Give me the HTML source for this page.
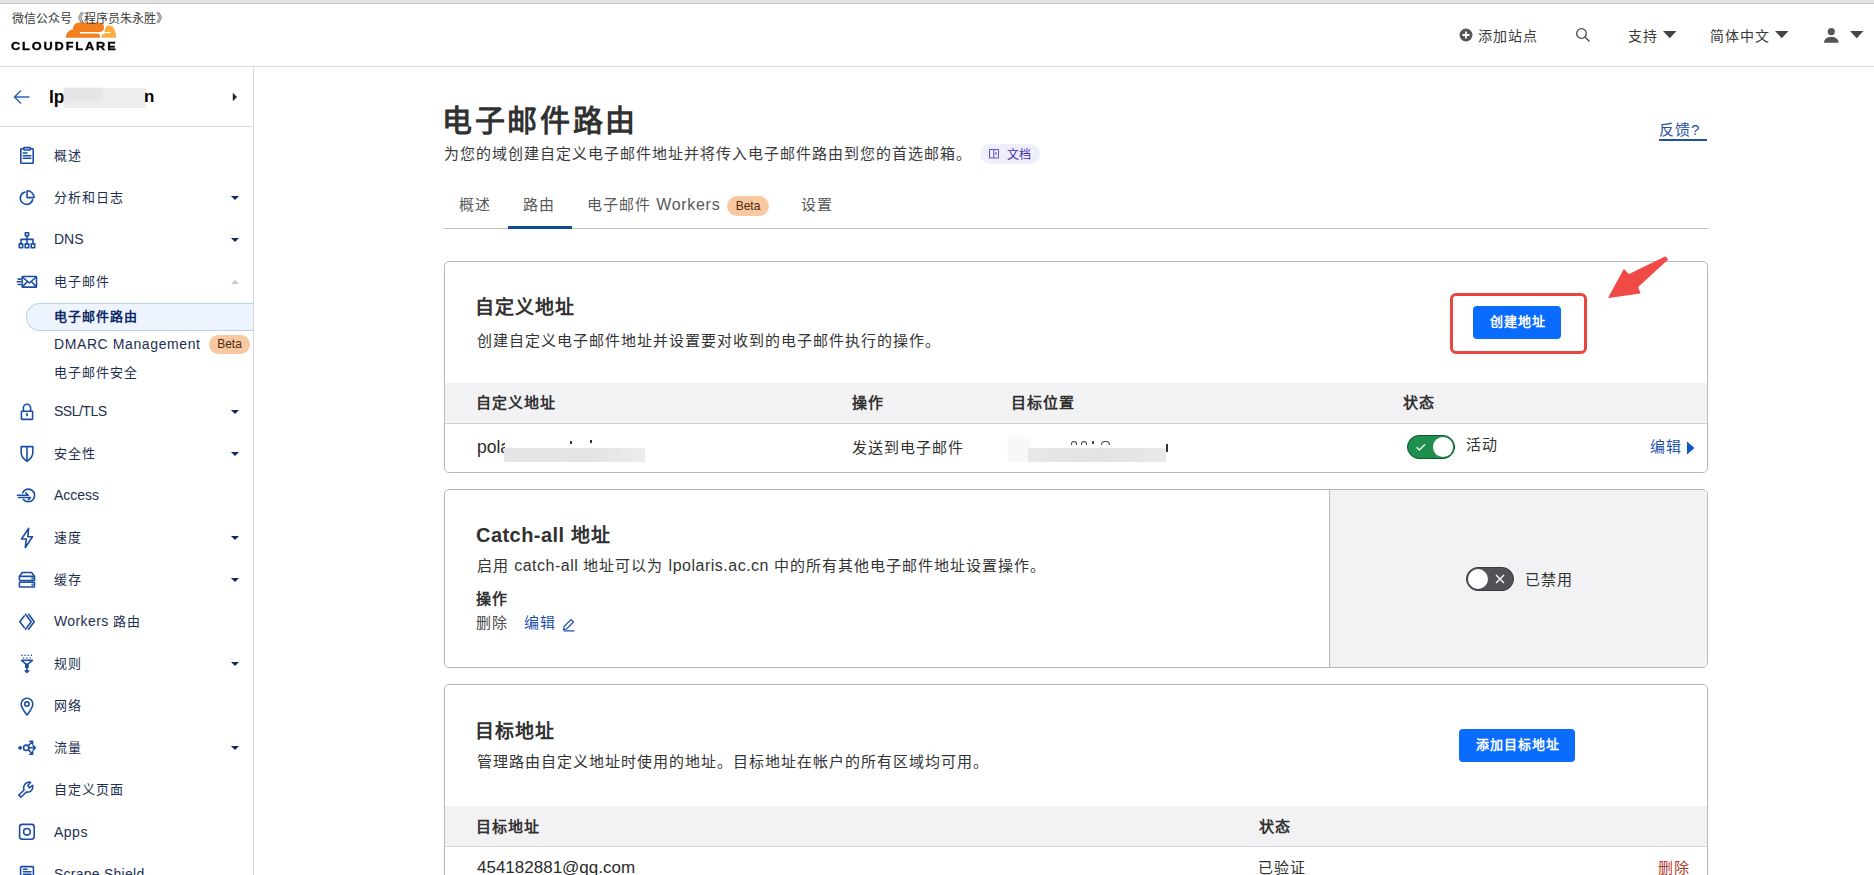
<!DOCTYPE html>
<html lang="zh-CN">
<head>
<meta charset="utf-8">
<style>
*{box-sizing:border-box;margin:0;padding:0}
html,body{width:1874px;height:875px;overflow:hidden;background:#fff}
body{position:relative;font-family:"Liberation Sans",sans-serif;color:#313131}
.a{position:absolute;white-space:nowrap}
.ln{position:absolute}
.nav{position:absolute;left:54px;font-size:14px;color:#1d2f4f;white-space:nowrap;line-height:16px}
.cj{font-size:13px;letter-spacing:1px}
.caret{position:absolute;left:231px;width:0;height:0;border-left:4px solid transparent;border-right:4px solid transparent;border-top:4.5px solid #0f2a5e}
.ico{position:absolute;left:12px;width:30px;height:30px;overflow:visible}
.ico *{fill:none;stroke:#1b4ea3;stroke-width:1.6;stroke-linecap:round;stroke-linejoin:round}
.card{position:absolute;left:444px;width:1264px;border:1px solid #b9b9bd;border-radius:5px;background:#fff;overflow:hidden}
.th{position:absolute;font-size:15px;letter-spacing:1px;font-weight:bold;color:#313131;white-space:nowrap}
.td{position:absolute;font-size:15px;letter-spacing:1px;color:#313131;white-space:nowrap}
.btn{position:absolute;background:#0a6cff;border-radius:4px;color:#fff;font-size:13px;letter-spacing:1px;text-indent:1px;font-weight:bold;text-align:center}
.badge{position:absolute;background:#f8c9a1;border-radius:10px;color:#4a2a10;font-size:12px;text-align:center}
</style>
</head>
<body>
<div class="ln" style="left:0;top:0;width:1874px;height:3px;background:#e2e2e2"></div>
<div class="ln" style="left:0;top:3px;width:1874px;height:1px;background:#c6c6c6"></div>
<div class="ln" style="left:0;top:66px;width:1874px;height:1px;background:#d9d9d9"></div>
<div class="ln" style="left:253px;top:67px;width:1px;height:808px;background:#d9d9d9"></div>

<!-- logo -->
<svg class="ln" style="left:0;top:0" width="130" height="60" viewBox="0 0 130 60">
  <path d="M65.9,37.8 C65.9,33.5 68.5,30 72.8,29.6 C73.2,25 75.5,22.4 79.5,22.4 L99,22.4 C102.5,22.4 104.2,25 104,28 C103.8,30.3 102.3,31.6 100.3,32 L79.8,32 L79.8,33.4 L97.8,33.4 C99.6,33.4 100.3,35.5 99.8,37.8 Z" fill="#f38020"/>
  <path d="M101.3,37.8 C101.8,35 103,33.6 104.5,33.3 L110.8,33.1 L110.8,32.1 L104.6,31.9 C104.8,28.3 106,25.4 108.8,25.4 C113.5,25.4 116,30 116,37.8 Z" fill="#faae40"/>
</svg>
<div class="a" style="left:12px;top:9px;font-size:12px;color:#3a3a3a">微信公众号《程序员朱永胜》</div>
<div class="a" style="left:11px;top:39px;font-size:11.6px;line-height:14px;font-weight:bold;letter-spacing:1.7px;color:#000;-webkit-text-stroke:0.35px #000;transform:scaleX(1.1);transform-origin:0 0">CLOUDFLARE</div>

<!-- header right -->
<svg class="ln" style="left:1459px;top:28px" width="14" height="14" viewBox="0 0 14 14"><circle cx="7" cy="7" r="6.5" fill="#555"/><path d="M7,3.5V10.5M3.5,7H10.5" stroke="#fff" stroke-width="1.8"/></svg>
<div class="a" style="left:1478px;top:25px;font-size:14px;letter-spacing:1px;color:#3a3a3a">添加站点</div>
<svg class="ln" style="left:1574px;top:26px" width="18" height="18" viewBox="0 0 18 18"><circle cx="7.5" cy="7.5" r="4.8" fill="none" stroke="#444" stroke-width="1.3"/><path d="M11,11L15.5,15.5" stroke="#444" stroke-width="1.3"/></svg>
<div class="a" style="left:1628px;top:25px;font-size:14px;letter-spacing:1px;color:#3a3a3a">支持</div>
<svg class="ln" style="left:1663px;top:31px" width="14" height="8" viewBox="0 0 14 8"><path d="M0,0H13.5L6.75,7.2Z" fill="#444"/></svg>
<div class="a" style="left:1710px;top:25px;font-size:14px;letter-spacing:1px;color:#3a3a3a">简体中文</div>
<svg class="ln" style="left:1775px;top:31px" width="14" height="8" viewBox="0 0 14 8"><path d="M0,0H13.5L6.75,7.2Z" fill="#444"/></svg>
<svg class="ln" style="left:1823px;top:27px" width="17" height="17" viewBox="0 0 17 17"><circle cx="8.3" cy="4.6" r="3.6" fill="#555"/><path d="M1,15.8C1,11.8 4,10 8.3,10C12.6,10 15.6,11.8 15.6,15.8Z" fill="#555"/></svg>
<svg class="ln" style="left:1850px;top:31px" width="14" height="8" viewBox="0 0 14 8"><path d="M0,0H13.5L6.75,7.2Z" fill="#444"/></svg>

<!-- sidebar -->
<svg class="ln" style="left:12px;top:88px" width="20" height="18" viewBox="0 0 20 18"><path d="M17.5,9H3M9,2.5L2.5,9L9,15.5" fill="none" stroke="#2e62b8" stroke-width="1.5"/></svg>
<div class="a" style="left:49px;top:87px;font-size:17.5px;font-weight:bold;color:#000">lp</div>
<div class="ln" style="left:64px;top:88px;width:82px;height:20px;background:#ededef;filter:blur(0.5px)"></div><div class="ln" style="left:64px;top:88px;width:38px;height:13px;background:#e5e5e7;filter:blur(1px)"></div>
<div class="a" style="left:144px;top:87px;font-size:17px;font-weight:bold;color:#000">n</div>
<svg class="ln" style="left:232px;top:92px" width="6" height="10" viewBox="0 0 6 10"><path d="M0.8,0.8L5,5L0.8,9.2Z" fill="#222"/></svg>
<div class="ln" style="left:0;top:126px;width:253px;height:1px;background:#d9d9d9"></div>

<!-- active item bg -->
<div class="ln" style="left:26px;top:303px;width:227px;height:28px;background:#eef4fe;border:1px solid #bcd0f0;border-right:none;border-radius:14px 0 0 14px"></div>

<!-- icons -->
<svg class="ico" style="top:142px" viewBox="0 0 30 30"><rect x="8.8" y="6.8" width="12.4" height="14.5" rx="0.6"/><rect x="11.8" y="5.6" width="6.6" height="2.4" rx="0.6" style="fill:#fff"/><path d="M11.3,11H15M11.3,13.7H18.8M11.3,16.3H18.8"/></svg>
<svg class="ico" style="top:184px" viewBox="0 0 30 30"><path d="M12.97,8A6.3,6.3 0 1 0 20.69,15.73"/><path d="M15.1,6.7V13.6H22A6.9,6.9 0 0 0 15.1,6.7Z"/></svg>
<svg class="ico" style="top:226px" viewBox="0 0 30 30"><rect x="13.3" y="6.8" width="3.3" height="3"/><path d="M15,9.8V17.8M9,17.8V13.4H21V17.8"/><rect x="7.3" y="17.9" width="3.4" height="3.8"/><rect x="13.2" y="17.9" width="3.5" height="3.8"/><rect x="19.2" y="17.9" width="3.5" height="3.8"/></svg>
<svg class="ico" style="top:268px" viewBox="0 0 30 30"><rect x="10.2" y="8.5" width="14.3" height="10.6" rx="0.5"/><path d="M10.5,9L17.4,15L24.2,9M10.5,18.6L15,14M24.2,18.6L19.8,14M6.2,11.1H8.6M5.2,13.8H8.6M6.2,16.5H8.6"/></svg>
<svg class="ico" style="top:396px" viewBox="0 0 30 30"><rect x="9.4" y="15.2" width="11.2" height="8.2" rx="0.6"/><path d="M11.4,15V11.8A3.6,3.6 0 0 1 18.6,11.8V15M15,17.6V19.8"/></svg>
<svg class="ico" style="top:438px" viewBox="0 0 30 30"><path d="M9.2,8.6H20.8V14.5C20.8,18 18.5,21 15,23.2C11.5,21 9.2,18 9.2,14.5Z"/><path d="M15,8.6V23"/></svg>
<svg class="ico" style="top:480px" viewBox="0 0 30 30"><path d="M10.6,12.8A6.3,6.3 0 1 1 11.4,19.4"/><path d="M5.4,15.3H16M13.8,12.9L16.2,15.3M6.5,17.5H18.5L16.4,19.6"/></svg>
<svg class="ico" style="top:522px" viewBox="0 0 30 30"><path d="M16.6,6.4L9.5,17H14.3L13.3,25.5L20.5,14.7H15.8Z"/></svg>
<svg class="ico" style="top:564px" viewBox="0 0 30 30"><path d="M7.4,12.4L10.3,8.5H19.6L22.5,12.4"/><rect x="7.4" y="12.4" width="15.1" height="4.2" rx="0.6"/><rect x="7.4" y="18.2" width="15.1" height="4.8" rx="0.8"/><circle cx="20.5" cy="14.4" r="0.4" style="fill:#1b4ea3"/><circle cx="20.5" cy="20.6" r="0.4" style="fill:#1b4ea3"/></svg>
<svg class="ico" style="top:606px" viewBox="0 0 30 30"><path d="M12.2,10L7.8,15.8L12.2,21.6M13.5,8.3L19.2,15.8L13.5,23.3M16.6,8.3L22.2,15.8L16.6,23.3"/></svg>
<svg class="ico" style="top:648px" viewBox="0 0 30 30"><path d="M9.6,12.3H20.4L14.9,16.8Z"/><path d="M14.9,16.8V24.5M13.2,22.8L14.9,24.5L16.6,22.8"/><rect x="13.8" y="16.6" width="2.2" height="2.6" style="fill:#1b4ea3"/><path d="M9.9,7.2V7.4M13,7.2V7.4M16.1,7.2V7.4M19.4,7.2V7.4M11.7,9.9V10.1M14.8,9.9V10.1M18,9.9V10.1" style="stroke-width:1.4"/></svg>
<svg class="ico" style="top:690px" viewBox="0 0 30 30"><path d="M15,25C12,21 9.2,17.8 9.2,14A5.8,5.8 0 0 1 20.8,14C20.8,17.8 18,21 15,25Z"/><circle cx="14.9" cy="14.1" r="2.2"/></svg>
<svg class="ico" style="top:732px" viewBox="0 0 30 30"><circle cx="8.1" cy="15.8" r="1.1" style="fill:#1b4ea3"/><circle cx="14.2" cy="15.8" r="2.7"/><path d="M16.2,13.8L20.4,9.6M17.8,9.3H20.6V12.1M16.9,15.8H23.2M21.2,13.6L23.4,15.8L21.2,18M16.2,17.8L20.4,22M17.8,22.3H20.6V19.5"/></svg>
<svg class="ico" style="top:774px" viewBox="0 0 30 30"><path d="M6.7,21.2L12,16C11,13 12.2,9.5 15.5,8.4C16.5,8.1 17.8,8.1 18.6,8.5L15.8,11.5L17.5,13.8L20.6,11.3C21.3,13.7 20.2,16.7 17.6,17.8C16.3,18.3 15.2,18.2 14.3,18L9,23.2Z"/></svg>
<svg class="ico" style="top:816px" viewBox="0 0 30 30"><rect x="7.6" y="8.4" width="14.6" height="14.8" rx="2.6"/><circle cx="14.9" cy="15.8" r="3.3"/></svg>
<svg class="ico" style="top:858px" viewBox="0 0 30 30"><rect x="8.6" y="8.6" width="12.8" height="15" rx="0.8"/><path d="M11.5,11.3H15M11.5,13.8H19M11.5,16.2H19"/></svg>

<!-- carets -->
<div class="caret" style="top:196px"></div>
<div class="caret" style="top:238px"></div>
<div class="caret" style="top:280px;border-top:none;border-bottom:4.5px solid #c5c9cf"></div>
<div class="caret" style="top:410px"></div>
<div class="caret" style="top:452px"></div>
<div class="caret" style="top:536px"></div>
<div class="caret" style="top:578px"></div>
<div class="caret" style="top:662px"></div>
<div class="caret" style="top:746px"></div>

<div class="nav cj" style="top:148px">概述</div>
<div class="nav cj" style="top:190px">分析和日志</div>
<div class="nav" style="top:231px">DNS</div>
<div class="nav cj" style="top:274px">电子邮件</div>
<div class="nav cj" style="top:309px;font-weight:bold;color:#0f2a66">电子邮件路由</div>
<div class="nav" style="top:336px;letter-spacing:0.6px">DMARC Management</div>
<div class="badge" style="left:209px;top:335px;width:41px;height:19px;line-height:19px">Beta</div>
<div class="nav cj" style="top:365px">电子邮件安全</div>
<div class="nav" style="top:403px;letter-spacing:-0.5px">SSL/TLS</div>
<div class="nav cj" style="top:446px">安全性</div>
<div class="nav" style="top:487px">Access</div>
<div class="nav cj" style="top:530px">速度</div>
<div class="nav cj" style="top:572px">缓存</div>
<div class="nav" style="top:613px"><span style="letter-spacing:0.4px">Workers</span> <span style="font-size:13px;letter-spacing:1px">路由</span></div>
<div class="nav cj" style="top:656px">规则</div>
<div class="nav cj" style="top:698px">网络</div>
<div class="nav cj" style="top:740px">流量</div>
<div class="nav cj" style="top:782px">自定义页面</div>
<div class="nav" style="top:824px;letter-spacing:0.5px">Apps</div>
<div class="nav" style="top:866px;letter-spacing:0.25px">Scrape Shield</div>

<!-- main header -->
<div class="a" style="left:442px;top:96px;font-size:30px;letter-spacing:2.7px;font-weight:bold;color:#313131">电子邮件路由</div>
<div class="a" style="left:444px;top:142px;font-size:15px;letter-spacing:1px;color:#3a3a3a">为您的域创建自定义电子邮件地址并将传入电子邮件路由到您的首选邮箱。</div>
<div class="ln" style="left:980px;top:144px;width:60px;height:20px;background:#efeefc;border-radius:10px"></div>
<svg class="ln" style="left:988px;top:147px" width="13" height="13" viewBox="0 0 13 13"><path d="M1.5,2.5H5.8V11H1.5ZM5.8,2.5H10.5V11H5.8M8,5V8" fill="none" stroke="#5b4fc9" stroke-width="1"/></svg>
<div class="a" style="left:1007px;top:145px;font-size:12px;color:#3b30b0">文档</div>
<div class="a" style="left:1659px;top:118px;font-size:15px;letter-spacing:1px;color:#1f4f9e">反馈?</div>
<div class="ln" style="left:1659px;top:139px;width:48px;height:1.5px;background:#1f4f9e"></div>

<!-- tabs -->
<div class="a" style="left:459px;top:193px;font-size:15px;letter-spacing:1px;color:#595959">概述</div>
<div class="a" style="left:523px;top:193px;font-size:15px;letter-spacing:1px;color:#595959">路由</div>
<div class="a" style="left:587px;top:193px;font-size:15px;letter-spacing:1px;color:#595959">电子邮件 <span style="font-size:16px;letter-spacing:0.7px">Workers</span></div>
<div class="badge" style="left:727px;top:196px;width:42px;height:20px;line-height:20px">Beta</div>
<div class="a" style="left:801px;top:193px;font-size:15px;letter-spacing:1px;color:#595959">设置</div>
<div class="ln" style="left:444px;top:228px;width:1264px;height:1px;background:#bdbdbd"></div>
<div class="ln" style="left:508px;top:226px;width:64px;height:3px;background:#0a4d9a"></div>

<!-- card 1 -->
<div class="card" style="top:261px;height:212px">
  <div class="ln" style="left:0;top:121px;width:1264px;height:41px;background:#f2f1f3;border-bottom:1px solid #d0d0d4"></div>
</div>
<div class="a" style="left:475px;top:292px;font-size:19px;letter-spacing:1px;font-weight:bold;color:#313131">自定义地址</div>
<div class="a" style="left:477px;top:329px;font-size:15px;letter-spacing:1px;color:#333">创建自定义电子邮件地址并设置要对收到的电子邮件执行的操作。</div>
<div class="btn" style="left:1473px;top:306px;width:88px;height:33px;line-height:32px">创建地址</div>
<div class="ln" style="left:1450px;top:293px;width:137px;height:61px;border:3.5px solid #e8463f;border-radius:6px"></div>
<svg class="ln" style="left:1600px;top:250px" width="80" height="60" viewBox="1600 250 80 60"><path d="M1609,297.3 L1624,269.8 L1628.9,274.8 L1665.2,257 L1667.4,259.3 L1637.3,287 L1639.8,293 Z" fill="#ef4a45" stroke="#ef4a45" stroke-width="1.2" stroke-linejoin="round"/></svg>

<div class="th" style="left:476px;top:391px">自定义地址</div>
<div class="th" style="left:852px;top:391px">操作</div>
<div class="th" style="left:1011px;top:391px">目标位置</div>
<div class="th" style="left:1403px;top:391px">状态</div>
<div class="td" style="left:477px;top:437px;font-size:17.5px;letter-spacing:0;color:#2a2a2a;width:28px;overflow:hidden">pola</div>
<div class="ln" style="left:570px;top:441px;width:1.5px;height:2.5px;background:#333"></div><div class="ln" style="left:590px;top:440px;width:1.5px;height:2.5px;background:#333"></div><div class="ln" style="left:504px;top:448px;width:141px;height:14px;background:linear-gradient(90deg,#e6e6e9,#e4e4e7 60%,#ececee);filter:blur(0.6px)"></div>
<div class="td" style="left:852px;top:436px">发送到电子邮件</div>
<div class="ln" style="left:1008px;top:437px;width:22px;height:25px;background:#f8f8fa;filter:blur(1px)"></div><div class="ln" style="left:1071px;top:441px;width:6px;height:4px;border:1.3px solid #444;border-bottom:none;border-radius:3px 3px 0 0"></div><div class="ln" style="left:1081px;top:441px;width:6px;height:4px;border:1.3px solid #444;border-bottom:none;border-radius:3px 3px 0 0"></div><div class="ln" style="left:1092px;top:441px;width:2px;height:3px;background:#444"></div><div class="ln" style="left:1101px;top:441px;width:9px;height:4px;border:1.3px solid #444;border-bottom:none;border-radius:4px 4px 0 0"></div><div class="ln" style="left:1028px;top:448px;width:138px;height:14px;background:linear-gradient(90deg,#e8e8eb,#e3e3e6 50%,#e9e9ec);filter:blur(0.6px)"></div><div class="ln" style="left:1166px;top:444px;width:1.5px;height:8px;background:#333"></div>
<div class="ln" style="left:1407px;top:435px;width:48px;height:24px;border-radius:12px;background:#1f8f4e;border:1.5px solid #0e5a2b"></div>
<div class="ln" style="left:1432.5px;top:437px;width:20.5px;height:20px;border-radius:50%;background:#fff"></div>
<svg class="ln" style="left:1415px;top:441px" width="12" height="12" viewBox="0 0 12 12"><path d="M1.5,6.2L4.3,9L10,3.5" fill="none" stroke="#e6f7e6" stroke-width="1.4"/></svg>
<div class="td" style="left:1466px;top:433px">活动</div>
<div class="td" style="left:1650px;top:435px;color:#1a50a8">编辑</div>
<svg class="ln" style="left:1686px;top:440px" width="10" height="16" viewBox="0 0 10 16"><path d="M1,1.5L8.5,8L1,14.5Z" fill="#0b55cc"/></svg>

<!-- card 2 -->
<div class="card" style="top:489px;height:179px">
  <div class="ln" style="left:884px;top:0;width:380px;height:179px;background:#f2f1f3;border-left:1px solid #b9b9bd"></div>
</div>
<div class="a" style="left:476px;top:520px;font-size:19px;letter-spacing:1px;font-weight:bold;color:#313131"><span style="font-size:20px;letter-spacing:0.45px">Catch-all</span> 地址</div>
<div class="a" style="left:477px;top:554px;font-size:15px;letter-spacing:1px;color:#333">启用 <span style="font-size:16px;letter-spacing:0.5px">catch-all</span> 地址可以为 <span style="font-size:16px;letter-spacing:0.5px">lpolaris.ac.cn</span> 中的所有其他电子邮件地址设置操作。</div>
<div class="th" style="left:476px;top:587px">操作</div>
<div class="td" style="left:476px;top:611px;color:#4a4a4a">删除</div>
<div class="td" style="left:524px;top:611px;color:#1a50a8">编辑</div>
<svg class="ln" style="left:561px;top:616px" width="15" height="16" viewBox="0 0 15 16"><path d="M2.5,13.5L3,10.5L10,3.5L12.5,6L5.5,13Z M2.5,14.8H13.5" fill="none" stroke="#1a50a8" stroke-width="1.2"/></svg>
<div class="ln" style="left:1466px;top:567px;width:48px;height:24px;border-radius:12px;background:#545058;border:1.5px solid #3a373d"></div>
<div class="ln" style="left:1468px;top:569px;width:20px;height:20px;border-radius:50%;background:#fff"></div>
<svg class="ln" style="left:1494px;top:573px" width="12" height="12" viewBox="0 0 12 12"><path d="M2,2L10,10M10,2L2,10" fill="none" stroke="#fff" stroke-width="1.4"/></svg>
<div class="td" style="left:1525px;top:568px">已禁用</div>

<!-- card 3 -->
<div class="card" style="top:684px;height:220px">
  <div class="ln" style="left:0;top:121px;width:1264px;height:41px;background:#f2f1f3;border-bottom:1px solid #d6d6da"></div>
</div>
<div class="a" style="left:475px;top:716px;font-size:19px;letter-spacing:1px;font-weight:bold;color:#313131">目标地址</div>
<div class="a" style="left:477px;top:750px;font-size:15px;letter-spacing:1px;color:#333">管理路由自定义地址时使用的地址。目标地址在帐户的所有区域均可用。</div>
<div class="btn" style="left:1459px;top:729px;width:116px;height:33px;line-height:32px">添加目标地址</div>
<div class="th" style="left:476px;top:814.5px">目标地址</div>
<div class="th" style="left:1259px;top:814.5px">状态</div>
<div class="td" style="left:477px;top:858px;font-size:17px;letter-spacing:0;color:#2a2a2a">454182881@qq.com</div>
<div class="td" style="left:1258px;top:856px">已验证</div>
<div class="td" style="left:1658px;top:856px;color:#b23a2a">删除</div>

</body>
</html>
